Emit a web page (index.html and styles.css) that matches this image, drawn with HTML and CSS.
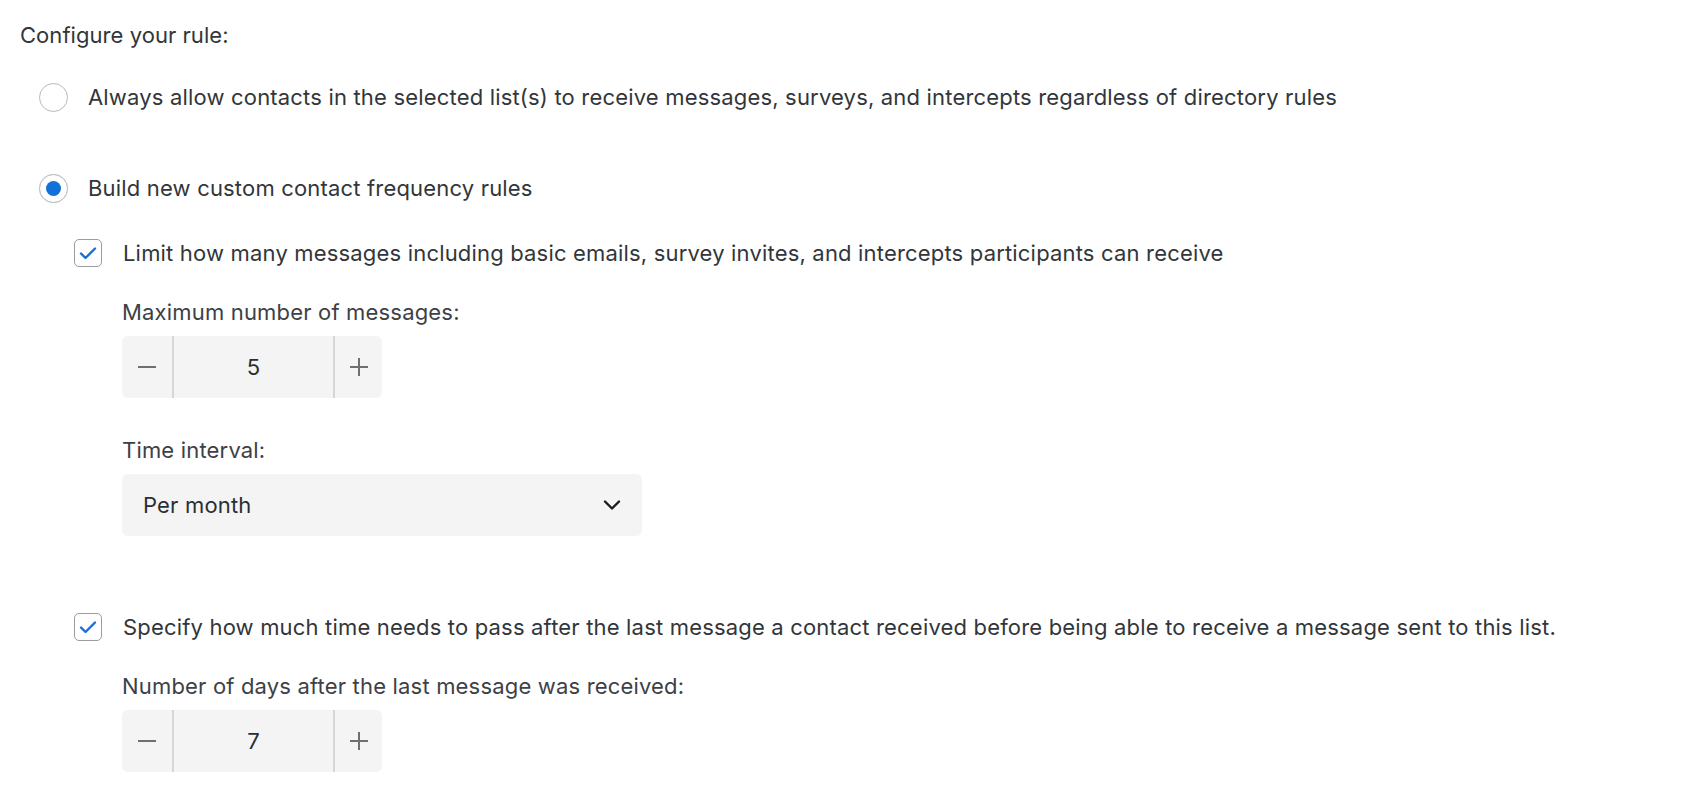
FILE: index.html
```html
<!DOCTYPE html>
<html lang="en">
<head>
<meta charset="utf-8">
<title>Configure your rule</title>
<link rel="stylesheet" href="styles.css">
</head>
<body>
<div class="page">
  <div class="title">Configure your rule:</div>

  <div class="radio-row first">
    <span class="radio"></span>
    <span class="text">Always allow contacts in the selected list(s) to receive messages, surveys, and intercepts regardless of directory rules</span>
  </div>

  <div class="radio-row second">
    <span class="radio checked"><span class="dot"></span></span>
    <span class="text">Build new custom contact frequency rules</span>
  </div>

  <div class="rules">
    <div class="check-row">
      <span class="checkbox">
        <svg viewBox="0 0 28 28" width="28" height="28"><path d="M7 14.5 L11.5 19 L21 9.5" fill="none" stroke="#1a6fd6" stroke-width="2.4" stroke-linecap="round" stroke-linejoin="round"/></svg>
      </span>
      <span class="text">Limit how many messages including basic emails, survey invites, and intercepts participants can receive</span>
    </div>

    <div class="field">
      <div class="label">Maximum number of messages:</div>
      <div class="stepper">
        <div class="step-btn minus">
          <svg viewBox="0 0 20 20" width="20" height="20"><path d="M1 10 H19" stroke="#6e6f72" stroke-width="2"/></svg>
        </div>
        <div class="step-value">5</div>
        <div class="step-btn plus">
          <svg viewBox="0 0 20 20" width="20" height="20"><path d="M1 10 H19 M10 1 V19" stroke="#6e6f72" stroke-width="2"/></svg>
        </div>
      </div>
    </div>

    <div class="field interval">
      <div class="label">Time interval:</div>
      <div class="select">
        <span>Per month</span>
        <svg viewBox="0 0 18 12" width="18" height="12"><path d="M2 2.5 L9 9.5 L16 2.5" fill="none" stroke="#1c1c1c" stroke-width="2.4" stroke-linecap="round" stroke-linejoin="round"/></svg>
      </div>
    </div>

    <div class="check-row second-check">
      <span class="checkbox">
        <svg viewBox="0 0 28 28" width="28" height="28"><path d="M7 14.5 L11.5 19 L21 9.5" fill="none" stroke="#1a6fd6" stroke-width="2.4" stroke-linecap="round" stroke-linejoin="round"/></svg>
      </span>
      <span class="text">Specify how much time needs to pass after the last message a contact received before being able to receive a message sent to this list.</span>
    </div>

    <div class="field">
      <div class="label">Number of days after the last message was received:</div>
      <div class="stepper">
        <div class="step-btn minus">
          <svg viewBox="0 0 20 20" width="20" height="20"><path d="M1 10 H19" stroke="#6e6f72" stroke-width="2"/></svg>
        </div>
        <div class="step-value">7</div>
        <div class="step-btn plus">
          <svg viewBox="0 0 20 20" width="20" height="20"><path d="M1 10 H19 M10 1 V19" stroke="#6e6f72" stroke-width="2"/></svg>
        </div>
      </div>
    </div>
  </div>
</div>
</body>
</html>
```

FILE: styles.css
```css
html, body {
  margin: 0;
  padding: 0;
  background: #ffffff;
}

body {
  font-family: Inter, "Open Sans", "Liberation Sans", sans-serif;
  font-size: 22px;
  letter-spacing: 0.18px;
  color: #32363a;
}

.page {
  padding: 20px 0 0 20px;
  display: flex;
  flex-direction: column;
}

.title {
  line-height: 30px;
  letter-spacing: 0.05px;
}

.radio-row {
  display: flex;
  align-items: center;
  gap: 20px;
  padding-left: 19px;
  line-height: 30px;
}

.radio-row.first { margin-top: 32px; }
.radio-row.second { margin-top: 61px; }

.radio {
  width: 29px;
  height: 29px;
  box-sizing: border-box;
  border: 1.5px solid #b9b9bd;
  border-radius: 50%;
  display: flex;
  align-items: center;
  justify-content: center;
  flex: none;
  background: #fff;
}

.radio.checked {
  box-shadow: 0 0 1px rgba(0,0,0,0.15);
}

.radio .dot {
  width: 15px;
  height: 15px;
  border-radius: 50%;
  background: #1170d9;
}

.rules {
  display: flex;
  flex-direction: column;
  padding-left: 54px;
}

.check-row {
  display: flex;
  align-items: center;
  gap: 21px;
  line-height: 30px;
  margin-top: 35px;
}

.check-row.second-check { margin-top: 76px; }

.checkbox {
  width: 28px;
  height: 28px;
  box-sizing: border-box;
  border: 1.5px solid #9a9ca0;
  border-radius: 5px;
  display: flex;
  align-items: center;
  justify-content: center;
  flex: none;
}

.checkbox svg {
  display: block;
  margin: -1.5px;
}

.field {
  display: flex;
  flex-direction: column;
  align-items: flex-start;
  padding-left: 48px;
  margin-top: 29px;
}

.field.interval { margin-top: 37px; }

.label {
  line-height: 30px;
  color: #3d4146;
  margin-bottom: 9px;
}

.stepper {
  display: flex;
  width: 260px;
  height: 62px;
  background: #f4f4f4;
  border-radius: 6px;
}

.step-btn {
  display: flex;
  align-items: center;
  justify-content: center;
  flex: none;
}

.step-btn svg { display: block; }

.step-btn.minus {
  width: 50px;
  border-right: 2px solid #d6d6d6;
}

.step-btn.plus {
  width: 47px;
  border-left: 2px solid #d6d6d6;
}

.step-value {
  flex: 1;
  display: flex;
  align-items: center;
  justify-content: center;
  color: #2b2e31;
}

.select {
  width: 520px;
  height: 62px;
  box-sizing: border-box;
  background: #f4f4f4;
  border-radius: 6px;
  display: flex;
  align-items: center;
  justify-content: space-between;
  padding: 0 21px 0 21px;
  color: #2b2e31;
}

.select svg { display: block; }
```
